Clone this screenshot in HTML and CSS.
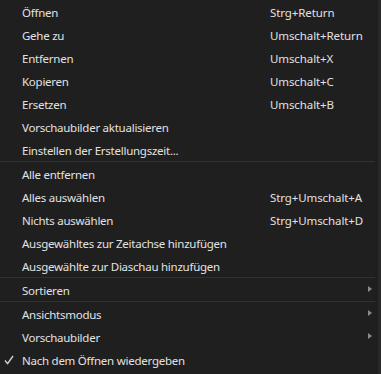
FILE: index.html
```html
<!DOCTYPE html>
<html lang="de">
<head>
<meta charset="utf-8">
<link rel="stylesheet" href="styles.css">
</head>
<body>
<div class="menu">
  <div class="item"><span class="label">Öffnen</span><span class="key">Strg+Return</span></div>
  <div class="item"><span class="label">Gehe zu</span><span class="key">Umschalt+Return</span></div>
  <div class="item"><span class="label">Entfernen</span><span class="key">Umschalt+X</span></div>
  <div class="item"><span class="label">Kopieren</span><span class="key">Umschalt+C</span></div>
  <div class="item"><span class="label">Ersetzen</span><span class="key">Umschalt+B</span></div>
  <div class="item"><span class="label">Vorschaubilder aktualisieren</span></div>
  <div class="item"><span class="label">Einstellen der Erstellungszeit...</span></div>
  <div class="sep"></div>
  <div class="item"><span class="label">Alle entfernen</span></div>
  <div class="item"><span class="label">Alles auswählen</span><span class="key">Strg+Umschalt+A</span></div>
  <div class="item"><span class="label">Nichts auswählen</span><span class="key">Strg+Umschalt+D</span></div>
  <div class="item"><span class="label">Ausgewähltes zur Zeitachse hinzufügen</span></div>
  <div class="item"><span class="label">Ausgewählte zur Diaschau hinzufügen</span></div>
  <div class="sep"></div>
  <div class="item"><span class="label">Sortieren</span><span class="arrow"></span></div>
  <div class="sep"></div>
  <div class="item"><span class="label">Ansichtsmodus</span><span class="arrow"></span></div>
  <div class="item"><span class="label">Vorschaubilder</span><span class="arrow"></span></div>
  <div class="item"><svg class="check" width="10" height="10" viewBox="0 0 10 10"><polyline points="1,5.5 3.6,8.6 9,1" fill="none" stroke="#d0d0d0" stroke-width="1.4"/></svg><span class="label">Nach dem Öffnen wiedergeben</span></div>
</div>
</body>
</html>
```
FILE: styles.css
```css
html, body {
  margin: 0;
  padding: 0;
  background: #1f1f1f;
}
body {
  width: 381px;
  height: 374px;
  overflow: hidden;
}
.menu {
  width: 378px;
  height: 374px;
  background: #1f1f1f;
  border-right: 3px solid #292929;
  font-family: "Noto Sans", "Open Sans", sans-serif;
  font-size: 11.5px;
  letter-spacing: -0.25px;
  color: #e2e2e2;
}
.item {
  position: relative;
  height: 23px;
  box-sizing: border-box;
  padding-top: 1px;
  display: flex;
  align-items: center;
  padding-left: 22px;
}
.label {
  width: 248px;
  white-space: nowrap;
}
.key {
  white-space: nowrap;
  word-spacing: 0;
  letter-spacing: -0.1px;
}
.sep {
  height: 1px;
  margin-right: 3px;
  background: #313131;
}
.arrow {
  position: absolute;
  left: 368px;
  top: 8px;
  width: 0;
  height: 0;
  border-top: 3.5px solid transparent;
  border-bottom: 3.5px solid transparent;
  border-left: 4px solid #8a8a8a;
}
.check {
  position: absolute;
  left: 4px;
  top: 7px;
}
```
